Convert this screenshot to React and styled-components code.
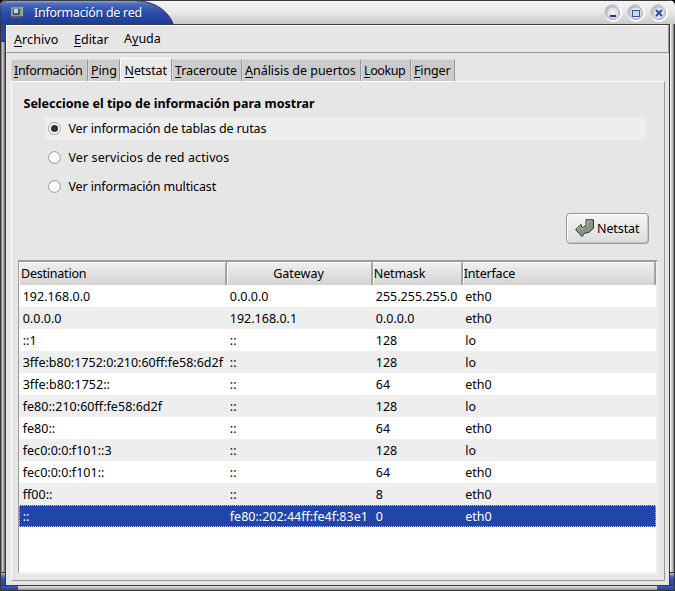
import React from "react";
import styled, { createGlobalStyle } from "styled-components";

const Global = createGlobalStyle`
  * { box-sizing: border-box; }
  body { margin: 0; background: #000; overflow: hidden; }
`;

const Window = styled.main`
  width: 675px;
  height: 591px;
  display: grid;
  grid-template-rows: 24px 561px 6px;
  border-radius: 6px 6px 0 0;
  overflow: hidden;
  background: #e6e6e6;
  color: #000;
  font: 12.5px/22px "Noto Sans", "Open Sans", sans-serif;
  white-space: nowrap;
`;

const TitleBar = styled.header`
  display: flex;
  justify-content: space-between;
  border-top: 1px solid #3c3a3e;
  background: linear-gradient(#f4f4f4, #e7e7e7 50%, #c9c9c9);
`;

const TitleTab = styled.div`
  width: 174px;
  height: 23px;
  display: grid;
  > * { grid-area: 1 / 1; }
`;

const TitleContent = styled.div`
  display: flex;
  align-items: center;
  height: 23px;
  padding-left: 10px;
  gap: 10px;
  color: #fff;
  letter-spacing: ${(p) => p.$ls}px;
  text-shadow: 1px 1px 0 #17307a;
`;

const Controls = styled.div`
  display: flex;
  gap: 5px;
  padding: 3px 7px 0 0;
  svg { display: block; }
`;

const Body = styled.div`
  display: grid;
  grid-template-columns: 6px 663px 6px;
  min-height: 0;
`;

const Edge = styled.div`
  display: flex;
  flex-direction: column;
  border-left: 1px solid #353439;
  background: ${(p) =>
    p.$right
      ? "linear-gradient(90deg, #f2f2f2 0 1px, #cfcfcf 1px 2px, #bcbcbc 2px 3px, #8d8d8d 3px 4px, #353439 4px)"
      : "linear-gradient(90deg, #8a8689 0 1px, #c9c5c6 1px 2px, #aaa6a7 2px 3px, #777377 3px 4px, #3b393c 4px)"};
`;

const EdgeAccent = styled.div`
  height: ${(p) => p.$h}px;
  width: 4px;
  margin-top: ${(p) => (p.$bottom ? "auto" : 0)};
  background: ${(p) => (p.$bottom ? "linear-gradient(#a9b6d6, #3857ac 40%, #2545a1)" : "#2747a1")};
  border-${(p) => (p.$bottom ? "top" : "bottom")}: 1px solid #353439;
`;

const BottomEdge = styled.footer`
  display: flex;
  justify-content: space-between;
  border-top: 1px solid #39383b;
  border-bottom: 1px solid #39383b;
  background: linear-gradient(#e0e0e0, #bdbdbd 60%, #8c8c8c);
`;

const Corner = styled.div`
  width: 18px;
  background: linear-gradient(#3d5eb5, #2140a0);
  border: solid #39383b;
  border-width: ${(p) => (p.$right ? "0 1px 0 0" : "0 0 0 1px")};
`;

const Client = styled.section`
  display: flex;
  flex-direction: column;
  border-top: 1px solid #3a393b;
  min-width: 0;
`;

const MenuBar = styled.nav`
  display: flex;
  height: 28px;
  padding: 3px 0 0 7px;
  border: 1px solid #fff;
  border-right-color: #9a9a9a;
  border-bottom-color: #9a9a9a;
`;

const Menu = styled.span`
  width: ${(p) => p.$w}px;
  margin-top: ${(p) => (p.$raised ? -1 : 0)}px;
  letter-spacing: ${(p) => p.$ls}px;
`;

const Key = styled.span`
  text-decoration: underline;
  text-decoration-thickness: 1px;
  text-underline-offset: 2px;
  text-decoration-skip-ink: none;
`;

const Tabs = styled.div`
  display: flex;
  align-items: flex-end;
  height: 28px;
  padding-left: 5px;
`;

const Tab = styled.div`
  width: ${(p) => p.$w}px;
  height: ${(p) => (p.$active ? 24 : 22)}px;
  margin-bottom: ${(p) => (p.$active ? -1 : 0)}px;
  padding-left: ${(p) => (p.$active ? 3.5 : 2)}px;
  line-height: ${(p) => (p.$active ? 23 : 22)}px;
  letter-spacing: ${(p) => p.$ls}px;
  background: ${(p) => (p.$active ? "#e9e9e9" : "#cbcbcb")};
  border: solid #f5f5f5;
  border-width: 1px 1px 0 1px;
  border-left-color: ${(p) => (p.$active ? "#fff" : "#d9d9d9")};
  border-right-color: #999;
  border-top-color: ${(p) => (p.$active ? "#fff" : "#dadada")};
`;

const Panel = styled.div`
  width: 654px;
  height: 500px;
  margin-left: 5px;
  padding: 11px 6px 6px 6px;
  border: 1px solid #fff;
  border-right-color: #999;
  border-bottom-color: #999;
  display: flex;
  flex-direction: column;
`;

const Heading = styled.h1`
  margin: 0 0 2px 5.5px;
  height: 22px;
  font-size: 12.5px;
  line-height: 22px;
  letter-spacing: ${(p) => p.$ls}px;
`;

const Options = styled.div`
  display: flex;
  flex-direction: column;
  gap: 6px;
  width: 601px;
  margin-left: 27px;
`;

const Option = styled.label`
  display: flex;
  align-items: center;
  height: 23px;
  padding-left: 3px;
  gap: 7.5px;
  letter-spacing: ${(p) => p.$ls}px;
  background: ${(p) => (p.$active ? "#eeeeee" : "transparent")};
`;

const ActionButton = styled.button`
  align-self: flex-end;
  display: flex;
  align-items: center;
  gap: 2px;
  width: 83px;
  height: 31px;
  margin: 15px 9px 16px 0;
  padding: 0 0 0 8px;
  font: inherit;
  letter-spacing: ${(p) => p.$ls}px;
  color: #000;
  border: 1px solid #989898;
  border-radius: 4px;
  background: linear-gradient(#f4f4f4, #dddddd);
  box-shadow: inset 1px 1px #fff, inset -1px -1px #c4c4c4;
`;

const Table = styled.div`
  width: 640px;
  height: 314px;
  display: flex;
  flex-direction: column;
  background: #fff;
  border: solid #9b9b9b;
  border-width: 2px 2px 2px 1px;
  border-right-color: #efefef;
  border-bottom-color: #f3f3f3;
`;

const Row = styled.div`
  display: grid;
  grid-template-columns: 208px 146px 90px 1fr;
  flex: none;
  height: 22px;
  line-height: 24px;
  color: ${(p) => (p.$selected ? "#fff" : "#000")};
  background: ${(p) => (p.$selected ? "#2145ad" : p.$alt ? "#eeeeee" : "#fff")};
  outline: ${(p) => (p.$selected ? "1px dotted #c2cdf0" : "none")};
  outline-offset: -1px;
`;

const HeaderRow = styled(Row)`
  height: 23px;
  background: transparent;
`;

const HeaderCell = styled.div`
  padding-left: 2px;
  text-align: ${(p) => (p.$center ? "center" : "left")};
  letter-spacing: ${(p) => p.$ls}px;
  background: linear-gradient(#f0f0f0, #d2d2d2);
  border: solid #999;
  border-width: 0 1px 1px 0;
  box-shadow: inset 1px 1px #fff, inset -1px 0 #ababab;
  &:nth-child(2) { padding: 0 2px 0 0; }
  &:nth-child(n + 3) { padding-left: 0.8px; }
`;

const Cell = styled.div`
  padding-left: 3.7px;
  letter-spacing: ${(p) => p.$ls}px;
  &:nth-child(n + 2) { padding-left: 2.8px; }
  &:nth-child(4) { padding-left: 2.3px; }
`;

const rows = [
  ["192.168.0.0", "0.0.0.0", "255.255.255.0", "eth0"],
  ["0.0.0.0", "192.168.0.1", "0.0.0.0", "eth0"],
  ["::1", "::", "128", "lo"],
  ["3ffe:b80:1752:0:210:60ff:fe58:6d2f", "::", "128", "lo"],
  ["3ffe:b80:1752::", "::", "64", "eth0"],
  ["fe80::210:60ff:fe58:6d2f", "::", "128", "lo"],
  ["fe80::", "::", "64", "eth0"],
  ["fec0:0:0:f101::3", "::", "128", "lo"],
  ["fec0:0:0:f101::", "::", "64", "eth0"],
  ["ff00::", "::", "8", "eth0"],
  ["::", "fe80::202:44ff:fe4f:83e1", "0", "eth0"],
];

const tabs = [
  ["Información", 77, -0.35],
  ["Ping", 32, -0.1],
  ["Netstat", 52, -0.1],
  ["Traceroute", 70, -0.1],
  ["Análisis de puertos", 119, -0.03],
  ["Lookup", 50, -0.4],
  ["Finger", 44, -0.15],
];

const Mnemonic = ({ text, at = 0 }) => (
  <>{text.slice(0, at)}<Key>{text[at]}</Key>{text.slice(at + 1)}</>
);

function WindowControl({ kind }) {
  return (
    <svg width="18" height="18" viewBox="0 0 18 18">
      <defs>
        <linearGradient id="bezel" x1="0" y1="0" x2="1" y2="1"><stop stopColor="#aaa" /><stop offset=".6" stopColor="#fff" /></linearGradient>
        <radialGradient id="lens"><stop stopColor="#f5f8fd" /><stop offset="1" stopColor="#c6ccd6" /></radialGradient>
      </defs>
      <circle cx="9" cy="9" r="8" fill="url(#lens)" stroke="url(#bezel)" strokeWidth="2" />
      <circle cx="9" cy="9" r="6.5" fill="none" stroke="#a6a9b0" />
      {kind === "min" && <path d="M6 12h6" stroke="#26377a" strokeWidth="2" />}
      {kind === "max" && <rect x="5.5" y="6.5" width="7" height="6" fill="#cbd8f4" stroke="#3155a4" />}
      {kind === "close" && <path d="M6 6l6 6M12 6l-6 6" stroke="#2b4c9c" strokeWidth="2" />}
    </svg>
  );
}

const Radio = ({ checked }) => (
  <svg width="13" height="13" viewBox="0 0 13 13">
    <circle cx="6.5" cy="6.5" r="5.9" fill="#fff" stroke="#999" />
    {checked && <circle cx="6.5" cy="6.5" r="3.6" fill="#333" />}
  </svg>
);

export default function App() {
  return (
    <>
      <Global />
      <Window>
        <TitleBar>
          <TitleTab>
            <svg width="174" height="23">
              <defs>
                <linearGradient id="title" x1="0" y1="0" x2="0" y2="1"><stop stopColor="#8fa4d8" /><stop offset=".12" stopColor="#4c6bb9" /><stop offset=".5" stopColor="#2c4da7" /><stop offset="1" stopColor="#1c3c9b" /></linearGradient>
              </defs>
              <path d="M0 23V5Q0 0 6 0H137C155 0 169 11 173 23Z" fill="url(#title)" />
              <path d="M0 23V5Q0 0 6 0M137 0C155 0 169 11 173 23" fill="none" stroke="#303039" />
            </svg>
            <TitleContent $ls={-0.29}>
              <svg width="14" height="13" viewBox="0 0 14 13">
                <path d="M1 1h12v9l-3 2H1z" fill="#56615f" />
                <path d="M1 1h10v9H1z" fill="#889792" />
                <path d="M3 3h7v6H3z" fill="#4b5c60" />
                <path d="M4 3h4v4H4z" fill="#c7dbd5" />
                <path d="M11 1h2v9h-2z" fill="#a1a69b" />
              </svg>
              <span>Información de red</span>
            </TitleContent>
          </TitleTab>
          <Controls>
            <WindowControl kind="min" />
            <WindowControl kind="max" />
            <WindowControl kind="close" />
          </Controls>
        </TitleBar>
        <Body>
          <Edge><EdgeAccent $h={18} /><EdgeAccent $bottom $h={13} /></Edge>
          <Client>
            <MenuBar>
              <Menu $w={60} $ls={0.1}><Mnemonic text="Archivo" /></Menu>
              <Menu $w={50} $ls={0}><Mnemonic text="Editar" /></Menu>
              <Menu $w={50} $ls={0} $raised><Mnemonic text="Ayuda" at={1} /></Menu>
            </MenuBar>
            <Tabs>
              {tabs.map(([name, w, ls]) => (
                <Tab key={name} $w={w} $ls={ls} $active={name === "Netstat"}><Mnemonic text={name} /></Tab>
              ))}
            </Tabs>
            <Panel>
              <Heading $ls={0.01}>Seleccione el tipo de información para mostrar</Heading>
              <Options>
                <Option $active $ls={-0.13}><Radio checked />Ver información de tablas de rutas</Option>
                <Option $ls={0.1}><Radio />Ver servicios de red activos</Option>
                <Option $ls={-0.14}><Radio />Ver información multicast</Option>
              </Options>
              <ActionButton $ls={-0.1}>
                <svg width="20" height="19" viewBox="0 0 20 19">
                  <path d="M11 .8h7.5v8.4L14 13.2l-4.6 1.2-2.4 3.2-6.4-7L6 5.4l.7 3 2.4-.4L11 6z" fill="#87967f" stroke="#26332a" strokeLinejoin="round" />
                  <path d="M12 6.5V2h5M2 10.3l3.2-3 .8 2.3 3.7-.6" fill="none" stroke="#b5c2ae" />
                </svg>
                Netstat
              </ActionButton>
              <Table>
                <HeaderRow>
                  <HeaderCell $ls={-0.22}>Destination</HeaderCell>
                  <HeaderCell $center $ls={0}>Gateway</HeaderCell>
                  <HeaderCell $ls={-0.15}>Netmask</HeaderCell>
                  <HeaderCell $ls={-0.2}>Interface</HeaderCell>
                </HeaderRow>
                {rows.map((row, i) => (
                  <Row key={i} $alt={i % 2 === 1} $selected={i === 10}>
                    {row.map((value, j) => <Cell key={j} $ls={j === 0 && value.length < 30 ? 0.03 : 0}>{value}</Cell>)}
                  </Row>
                ))}
              </Table>
            </Panel>
          </Client>
          <Edge $right><EdgeAccent $bottom $h={13} /></Edge>
        </Body>
        <BottomEdge><Corner /><Corner $right /></BottomEdge>
      </Window>
    </>
  );
}
